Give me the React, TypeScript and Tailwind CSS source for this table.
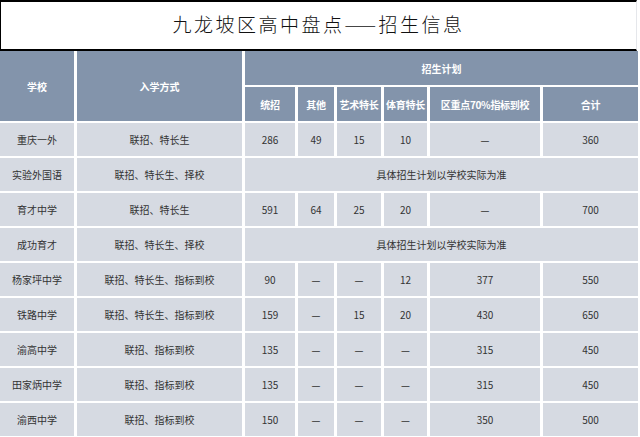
type Row = { school: string; way: string; cells?: string[] };

const rows: Row[] = [
  { school: "重庆一外", way: "联招、特长生", cells: ["286", "49", "15", "10", "—", "360"] },
  { school: "实验外国语", way: "联招、特长生、择校" },
  { school: "育才中学", way: "联招、特长生", cells: ["591", "64", "25", "20", "—", "700"] },
  { school: "成功育才", way: "联招、特长生、择校" },
  { school: "杨家坪中学", way: "联招、特长生、指标到校", cells: ["90", "—", "—", "12", "377", "550"] },
  { school: "铁路中学", way: "联招、特长生、指标到校", cells: ["159", "—", "15", "20", "430", "650"] },
  { school: "渝高中学", way: "联招、指标到校", cells: ["135", "—", "—", "—", "315", "450"] },
  { school: "田家炳中学", way: "联招、指标到校", cells: ["135", "—", "—", "—", "315", "450"] },
  { school: "渝西中学", way: "联招、指标到校", cells: ["150", "—", "—", "—", "350", "500"] },
];

const subHeads = ["统招", "其他", "艺术特长", "体育特长", "区重点70%指标到校", "合计"];

const font = { fontFamily: '"Noto Sans CJK SC", "Noto Sans", sans-serif' };

export default function App() {
  return (
    <div className="w-[640px] h-[437px] bg-white overflow-hidden" style={font}>
      {/* Title */}
      <div className="h-[51px] w-[637px] border-t-2 border-l border-b-2 border-black border-r border-r-gray-200 flex justify-center pt-[9px]">
        <h1 className="text-[19px] leading-[26px] tracking-[2.5px] text-[#111] font-light">九龙坡区高中盘点——招生信息</h1>
      </div>

      <div className="grid grid-cols-[74px_165px_50px_36px_44px_43px_110px_95px] grid-rows-[34px_34px_repeat(9,33px)] gap-x-[3px] gap-y-[2px] w-[638px]">
        {/* Header */}
        <div className="row-span-2 bg-[#8394ab] text-white text-[10px] font-bold flex items-center justify-center">学校</div>
        <div className="row-span-2 bg-[#8394ab] text-white text-[10px] font-bold flex items-center justify-center">入学方式</div>
        <div className="col-span-6 bg-[#8394ab] text-white text-[10px] font-bold flex items-center justify-center">招生计划</div>
        {subHeads.map((h) => (
          <div key={h} className="bg-[#8394ab] text-white text-[10px] font-bold flex items-center justify-center whitespace-nowrap tracking-[-0.3px]">
            {h}
          </div>
        ))}

        {/* Body */}
        {rows.map((r) => (
          <Body key={r.school} row={r} />
        ))}
      </div>
    </div>
  );
}

function Body({ row }: { row: Row }) {
  const cell = "bg-[#d6dae2] text-[#333] text-[10px] flex items-center justify-center whitespace-nowrap";
  return (
    <>
      <div className={cell}>{row.school}</div>
      <div className={cell}>{row.way}</div>
      {row.cells ? (
        row.cells.map((c, i) => (
          <div key={i} className={`${cell} text-[10.5px]`}>
            {c}
          </div>
        ))
      ) : (
        <div className={`${cell} col-span-6`}>具体招生计划以学校实际为准</div>
      )}
    </>
  );
}
